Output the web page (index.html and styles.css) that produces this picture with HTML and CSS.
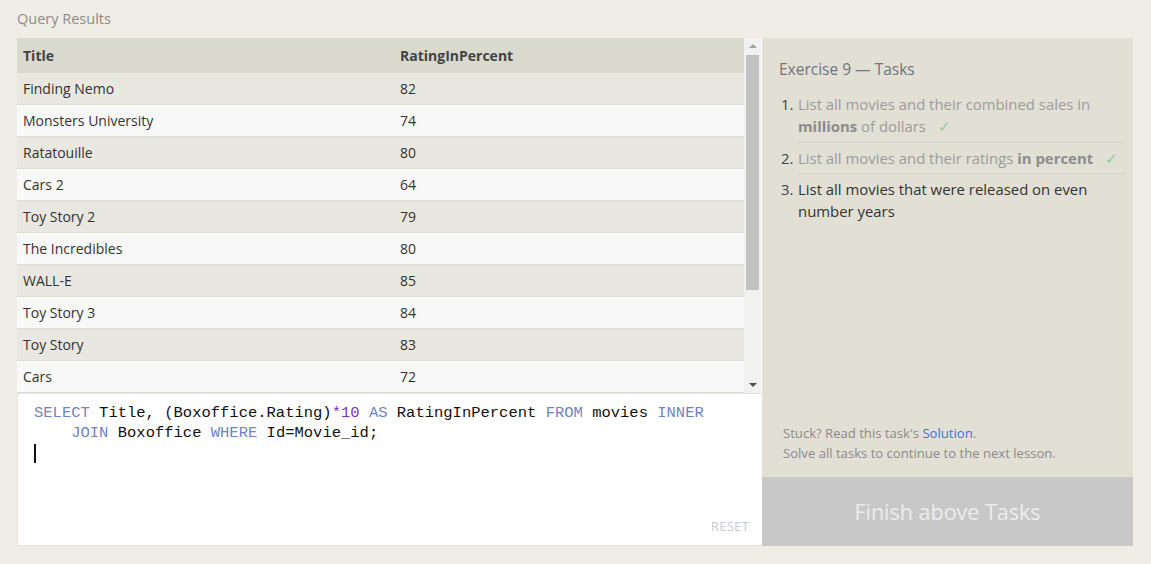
FILE: index.html
```html
<!DOCTYPE html>
<html>
<head>
<meta charset="utf-8">
<link rel="stylesheet" href="styles.css">
</head>
<body>
<div class="page">
  <div class="caption">Query Results</div>
  <div class="main">
    <div class="left">
      <div class="results">
        <table class="grid">
          <thead>
            <tr><th class="c1">Title</th><th>RatingInPercent</th></tr>
          </thead>
          <tbody>
            <tr><td>Finding Nemo</td><td>82</td></tr>
            <tr><td>Monsters University</td><td>74</td></tr>
            <tr><td>Ratatouille</td><td>80</td></tr>
            <tr><td>Cars 2</td><td>64</td></tr>
            <tr><td>Toy Story 2</td><td>79</td></tr>
            <tr><td>The Incredibles</td><td>80</td></tr>
            <tr><td>WALL-E</td><td>85</td></tr>
            <tr><td>Toy Story 3</td><td>84</td></tr>
            <tr><td>Toy Story</td><td>83</td></tr>
            <tr><td>Cars</td><td>72</td></tr>
          </tbody>
        </table>
        <div class="scrollbar">
          <div class="arrow up"></div>
          <div class="thumb"></div>
          <div class="arrow down"></div>
        </div>
      </div>
      <div class="editor">
        <div class="code"><span class="kw">SELECT</span> Title, (Boxoffice.Rating)<span class="num">*10</span> <span class="kw">AS</span> RatingInPercent <span class="kw">FROM</span> movies <span class="kw">INNER</span>
    <span class="kw">JOIN</span> Boxoffice <span class="kw">WHERE</span> Id=Movie_id;</div>
        <div class="cursor"></div>
        <div class="reset">RESET</div>
      </div>
    </div>
    <div class="right">
      <div class="tasks">
        <h3 class="heading">Exercise 9 — Tasks</h3>
        <ol class="list">
          <li class="task done"><span class="n">1.</span><span class="t">List all movies and their combined sales in <b>millions</b> of dollars <span class="check">✓</span></span></li>
          <li class="task done"><span class="n">2.</span><span class="t">List all movies and their ratings <b>in percent</b> <span class="check">✓</span></span></li>
          <li class="task"><span class="n">3.</span><span class="t">List all movies that were released on even number years</span></li>
        </ol>
      </div>
      <div class="help">
        <div>Stuck? Read this task's <a class="link">Solution</a>.</div>
        <div>Solve all tasks to continue to the next lesson.</div>
      </div>
      <div class="finish">Finish above Tasks</div>
    </div>
  </div>
</div>
</body>
</html>
```
FILE: styles.css
```css
html, body {
  margin: 0;
  padding: 0;
  background: #efede6;
  font-family: "Open Sans", "Noto Sans", sans-serif;
}
.page {
  padding: 0 18px 0 17px;
}
.caption {
  height: 38px;
  line-height: 38px;
  font-size: 14.5px;
  color: #8b8b8b;
}
.main {
  display: flex;
  height: 508px;
}
.left {
  width: 745px;
  display: flex;
  flex-direction: column;
  background: #fff;
  box-shadow: inset 1px 0 0 #e4e2d9;
}
.results {
  display: flex;
  height: 355px;
  border-bottom: 1px solid #e3e2dc;
}
.grid {
  width: 727px;
  border-collapse: collapse;
  font-size: 14px;
  color: #333;
  align-self: flex-start;
}
.grid th {
  background: #dad9ce;
  height: 35px;
  padding: 0 6px;
  text-align: left;
  font-weight: 700;
  color: #444;
}
.grid th.c1 {
  width: 365px;
}
.grid td {
  height: 31px;
  padding: 0 6px;
  border-bottom: 1px solid #dedcd4;
}
.grid tbody tr:nth-child(odd) td {
  background: #e9e8e0;
}
.grid tbody tr:nth-child(even) td {
  background: #f8f8f8;
}
.scrollbar {
  width: 17px;
  background: #f1f1f1;
  display: flex;
  flex-direction: column;
  align-items: center;
}
.arrow {
  width: 0;
  height: 0;
  border-left: 4px solid transparent;
  border-right: 4px solid transparent;
}
.arrow.up {
  margin-top: 6px;
  border-bottom: 4px solid #a3a3a3;
}
.arrow.down {
  margin-top: auto;
  margin-bottom: 6px;
  border-top: 4px solid #505050;
}
.thumb {
  width: 13px;
  height: 235px;
  margin-top: 7px;
  background: #c1c1c1;
}
.editor {
  flex: 1;
  padding: 9px 0 0 17px;
  display: flex;
  flex-direction: column;
  border-bottom: 1px solid #e3e1d8;
}
.code {
  font-family: "Liberation Mono", "DejaVu Sans Mono", monospace;
  font-size: 15.5px;
  line-height: 20px;
  white-space: pre;
  color: #111;
}
.kw {
  color: #6f84c0;
}
.num {
  color: #7a32c4;
}
.cursor {
  width: 2px;
  height: 19px;
  background: #111;
  margin-top: 1px;
}
.reset {
  margin-top: auto;
  align-self: flex-end;
  margin-right: 13px;
  margin-bottom: 10px;
  font-size: 13.5px;
  color: #c8cbd3;
}
.right {
  width: 371px;
  background: #e2e0d5;
  display: flex;
  flex-direction: column;
}
.tasks {
  flex: 1;
  padding: 20px 7px 0 17px;
}
.heading {
  margin: 0;
  font-size: 15.5px;
  font-weight: 400;
  line-height: 22px;
  color: #6d7580;
}
.list {
  list-style: none;
  margin: 13px 0 0;
  padding: 0;
  font-size: 14.9px;
  line-height: 22px;
  color: #333;
}
.task {
  display: flex;
  padding: 4px 0;
  border-bottom: 1px solid #d6d4c9;
  margin-left: 19px;
}
.task:first-child {
  padding-top: 0;
  padding-bottom: 5px;
}
.task:last-child {
  border-bottom: none;
}
.n {
  width: 17px;
  margin-left: -17px;
  flex: none;
  color: #444;
}
.task.done .t {
  color: #9c9c9c;
}
.task.done b {
  color: #8c8c8c;
}
.check {
  color: #8fcf95;
  margin-left: 8px;
}
.help {
  padding: 0 0 14px 21px;
  font-size: 13.1px;
  line-height: 20px;
  color: #8a8a8a;
}
.link {
  color: #3f72d8;
}
.finish {
  height: 69px;
  background: #c8c8c8;
  color: #ececec;
  font-size: 21.5px;
  display: flex;
  align-items: center;
  justify-content: center;
}
```
